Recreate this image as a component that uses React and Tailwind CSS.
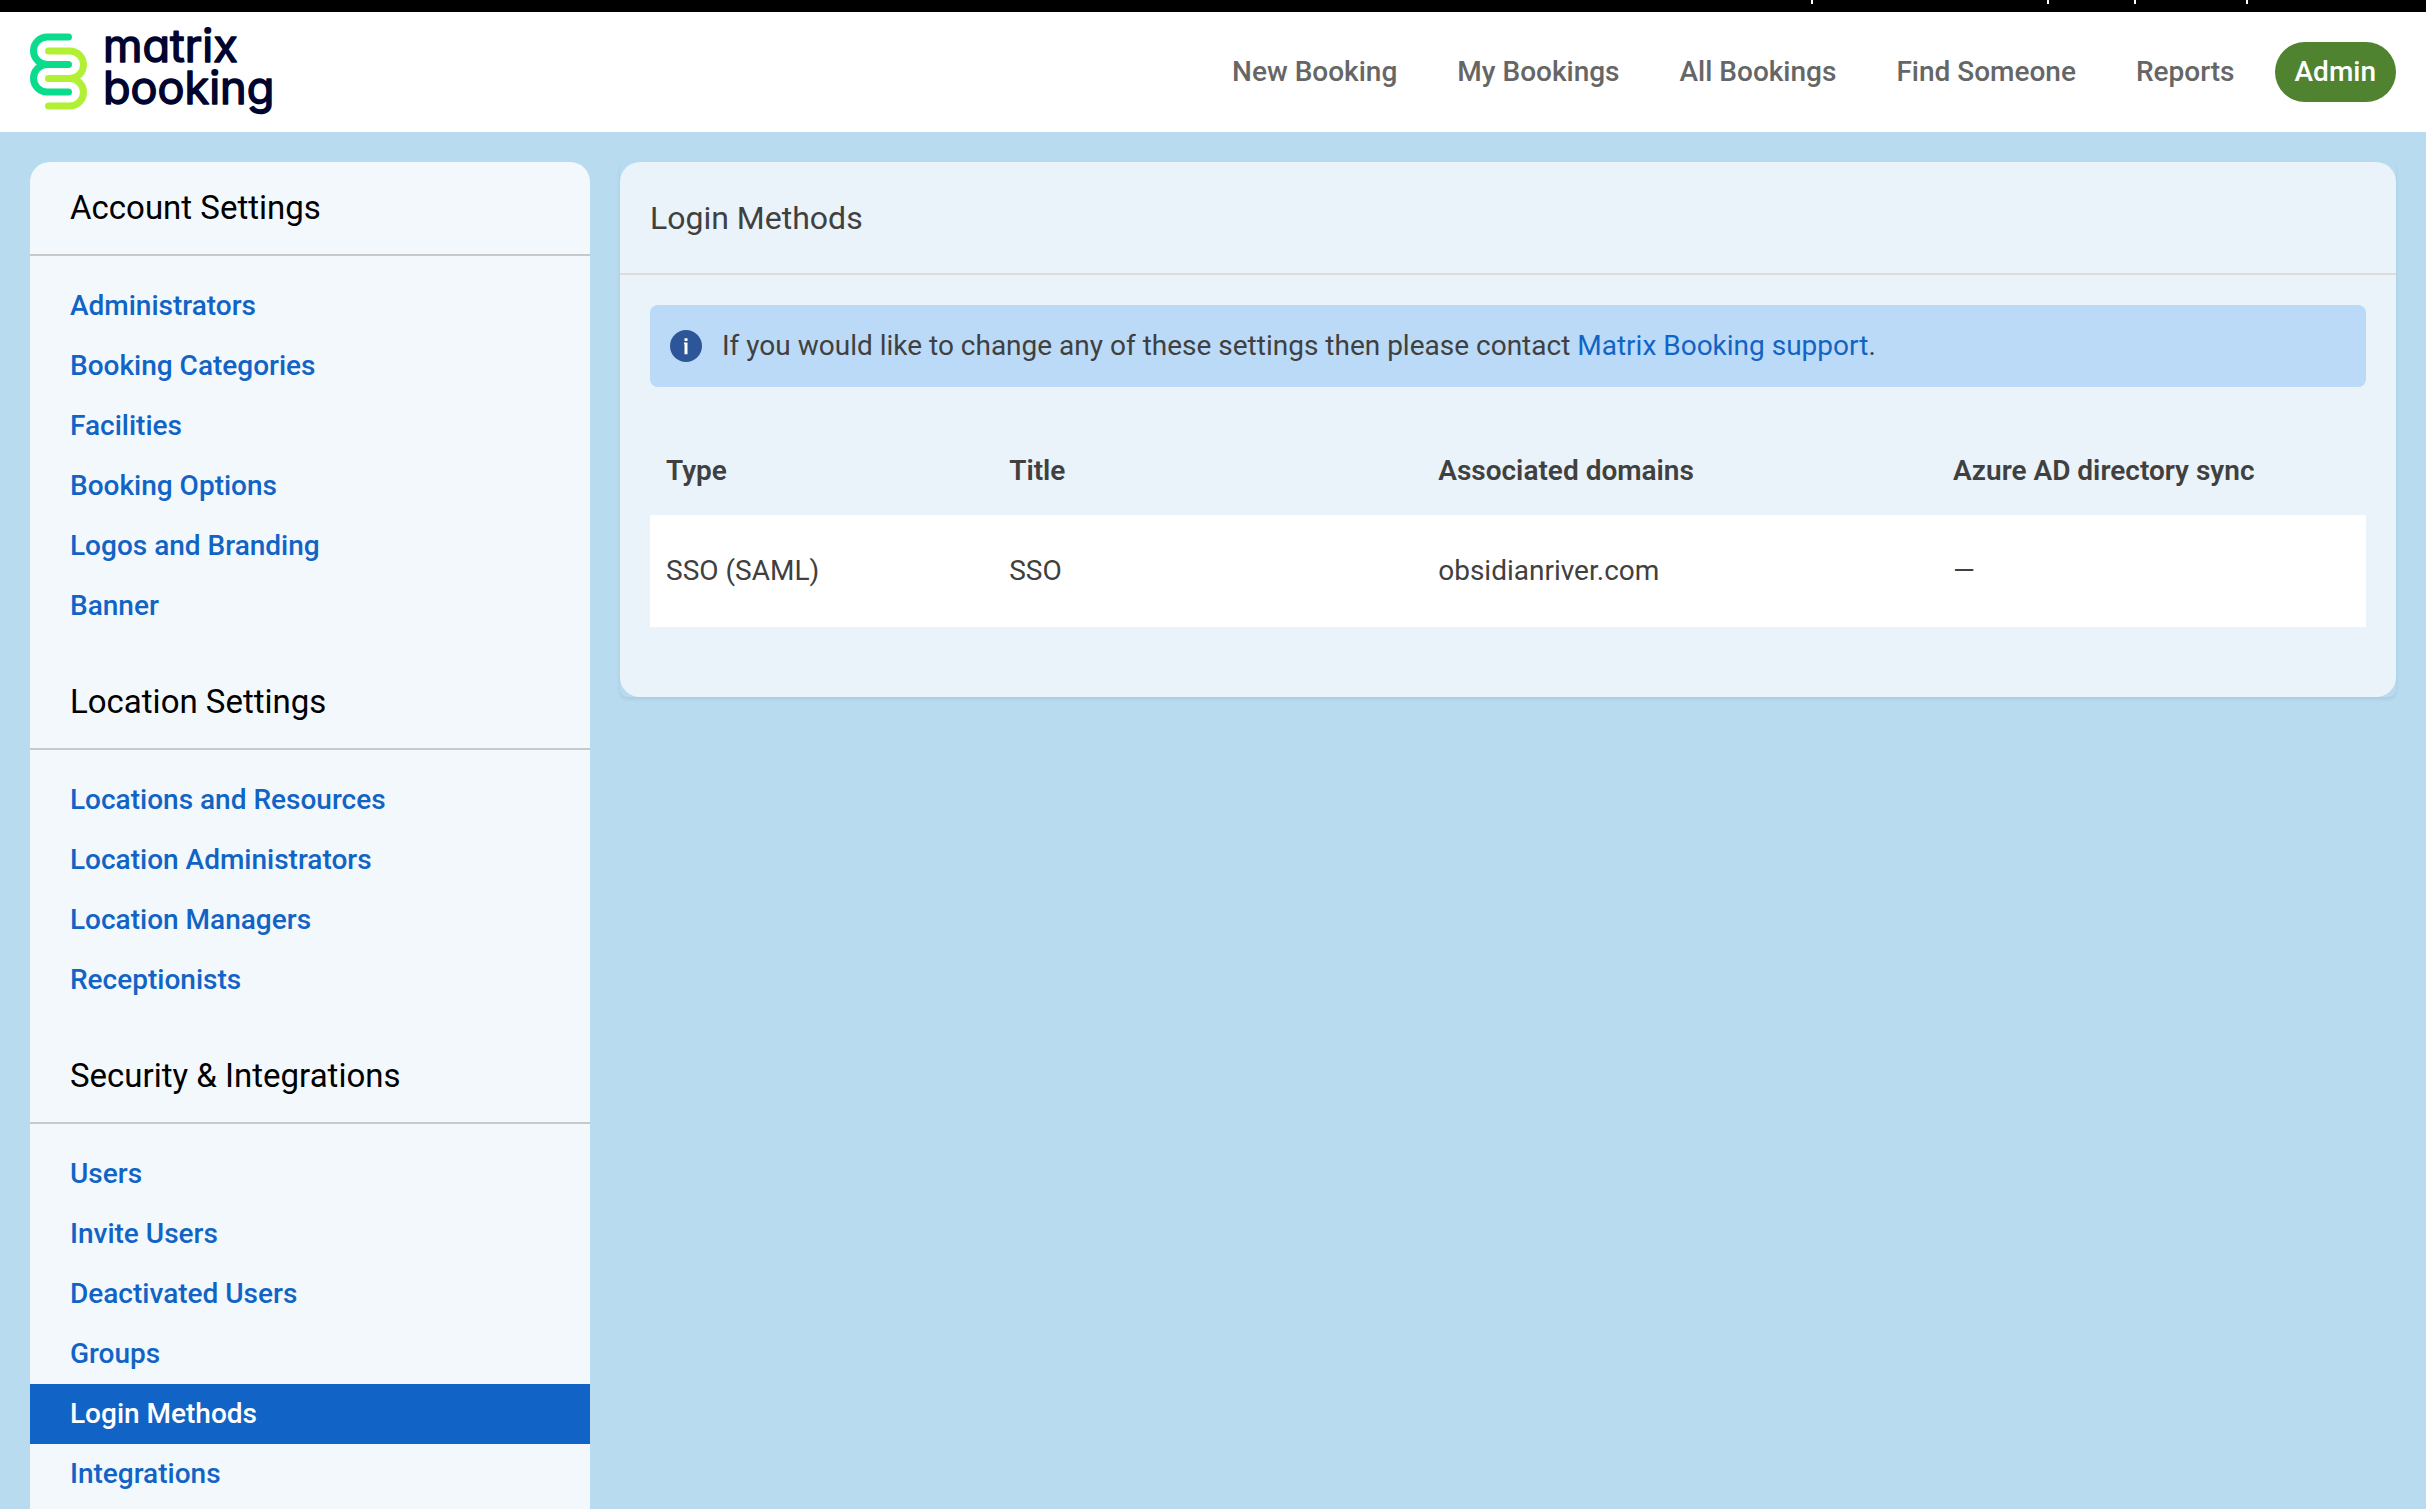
import clsx from 'clsx'

const NAV = ['New Booking', 'My Bookings', 'All Bookings', 'Find Someone', 'Reports', 'Admin']

const MENU = [
  { title: 'Account Settings', items: ['Administrators', 'Booking Categories', 'Facilities', 'Booking Options', 'Logos and Branding', 'Banner'] },
  { title: 'Location Settings', items: ['Locations and Resources', 'Location Administrators', 'Location Managers', 'Receptionists'] },
  { title: 'Security & Integrations', items: ['Users', 'Invite Users', 'Deactivated Users', 'Groups', 'Login Methods', 'Integrations'] },
]

const COLUMNS = [
  ['Type', 'w-[20%]'],
  ['Title', 'w-[25%]'],
  ['Associated domains', 'w-[30%]'],
  ['Azure AD directory sync', 'w-[25%]'],
]

const METHODS = [
  { type: 'SSO (SAML)', title: 'SSO', domains: 'obsidianriver.com', sync: '—' },
]

const Logo = () => (
  <svg width="244" height="110" viewBox="0 -12 244 110" fill="none" strokeLinecap="round" strokeLinejoin="round">
    <g strokeWidth="7">
      <path stroke="#0BDB8C" d="M38.5 8H17.25a13.75 13.75 0 0 0 0 27.500H38.5M17.25 35.500a13.75 13.75 0 0 0 0 27.500H38.5"/>
      <path stroke="#B2F036" d="M18.5 22H39.75a13.75 13.75 0 0 1 0 27.500H18.5M39.75 49.500a13.75 13.75 0 0 1 0 27.500H18.5"/>
    </g>
    <g className="font-['Inter',sans-serif] text-[45px] font-normal [font-feature-settings:'cv11'] [font-optical-sizing:none]" fill="#00042f" stroke="#00042f" strokeWidth="1.500">
      <text x="73" y="33">matrix</text>
      <text x="73" y="75">booking</text>
    </g>
  </svg>
)

const Sidebar = () => (
  <aside className="w-[560px] shrink-0 rounded-t-[20px] bg-[#f3f8fc]">
    {MENU.map(({ title, items }) => (
      <section key={title}>
        <h2 className="flex h-[94px] items-center border-b-2 border-[#c9c9c9] px-10 text-[33px] text-black">{title}</h2>
        <ul className="py-5">
          {items.map(item => (
            <li key={item}>
              <a href="#" className={clsx('flex h-15 items-center px-10 font-medium', item === 'Login Methods' ? 'bg-[#1164c5] text-white' : 'text-[#1164c5]')}>
                {item}
              </a>
            </li>
          ))}
        </ul>
      </section>
    ))}
  </aside>
)

export default function App() {
  return (
    <div className="h-screen overflow-hidden bg-[#b8dbf0] font-['Roboto',sans-serif] text-[28px] leading-10 text-[#404040]">
      {/* Utility bar, only the dividers reach into view */}
      <div className="flex h-3 justify-end bg-black" aria-hidden="true">
        <span className="h-1 w-[236px] border-l-2 border-white"/>
        <span className="h-1 w-[87px] border-l-2 border-white"/>
        <span className="h-1 w-28 border-l-2 border-white"/>
        <span className="h-1 w-[180px] border-l-2 border-white"/>
      </div>

      <header className="flex h-[120px] items-center justify-between bg-white px-[30px]">
        <a href="#" aria-label="Matrix Booking"><Logo/></a>
        <nav className="flex items-center gap-5">
          {NAV.map(label => (
            <a key={label} href="#"
              className={clsx('flex h-15 items-center rounded-full px-5 font-medium', label === 'Admin' ? 'bg-[#4f832f] text-white' : 'text-[#666]')}>
              {label}
            </a>
          ))}
        </nav>
      </header>

      <div className="flex items-start gap-[30px] p-[30px]">
        <Sidebar/>

        <main className="min-w-0 flex-1 rounded-lg shadow-[0_2px_4px_rgba(0,0,0,0.08)]">
          <div className="rounded-[20px] bg-[#eaf2fa] pb-[70px]">
            <h1 className="flex h-[113px] items-center border-b-2 border-[#dcdcdc] px-[30px] text-[32px]">Login Methods</h1>
            <div className="px-[30px] pt-[30px]">
              <div className="flex h-[82px] items-center gap-5 rounded-lg bg-[#bbdaf7] px-5">
                <svg width="32" height="32" viewBox="0 0 32 32">
                  <circle cx="16" cy="16" r="16" fill="#2c5697"/>
                  <path fill="#fff" d="M14.500 8.300h3v2.700h-3zM14 12.500h3.500v11.800h-3v-10h-.5z"/>
                </svg>
                <p>If you would like to change any of these settings then please contact <a href="#" className="text-[#1164c5]">Matrix Booking support</a>.</p>
              </div>

              <table className="mt-10 w-full table-fixed text-left">
                <thead>
                  <tr className="h-[88px]">
                    {COLUMNS.map(([label, width]) => (
                      <th key={label} className={clsx('px-4 font-semibold', width)}>{label}</th>
                    ))}
                  </tr>
                </thead>
                <tbody>
                  {METHODS.map(m => (
                    <tr key={m.type} className="h-28 bg-white">
                      <td className="px-4">{m.type}</td>
                      <td className="px-4">{m.title}</td>
                      <td className="px-4">{m.domains}</td>
                      <td className="px-4">{m.sync}</td>
                    </tr>
                  ))}
                </tbody>
              </table>
            </div>
          </div>
        </main>
      </div>
    </div>
  )
}
